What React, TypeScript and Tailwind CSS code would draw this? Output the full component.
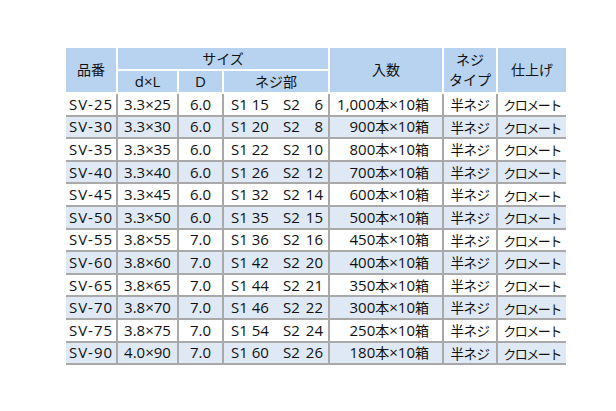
import React from "react";

const rows: [string, string, string, string, string, string][] = [
  ["SV-25", "3.3×25", "6.0", "15", "6", "1,000"],
  ["SV-30", "3.3×30", "6.0", "20", "8", "900"],
  ["SV-35", "3.3×35", "6.0", "22", "10", "800"],
  ["SV-40", "3.3×40", "6.0", "26", "12", "700"],
  ["SV-45", "3.3×45", "6.0", "32", "14", "600"],
  ["SV-50", "3.3×50", "6.0", "35", "15", "500"],
  ["SV-55", "3.8×55", "7.0", "36", "16", "450"],
  ["SV-60", "3.8×60", "7.0", "42", "20", "400"],
  ["SV-65", "3.8×65", "7.0", "44", "21", "350"],
  ["SV-70", "3.8×70", "7.0", "46", "22", "300"],
  ["SV-75", "3.8×75", "7.0", "54", "24", "250"],
  ["SV-90", "4.0×90", "7.0", "60", "26", "180"],
];

export default function App() {
  const font = { fontFamily: '"Open Sans", "Noto Sans CJK JP", sans-serif' };
  const hc = "bg-[#b8d3ef] border-2 border-white text-[14px] font-normal text-[#111] p-0";
  const bc = "border-x-2 border-b-2 border-[#a9a9a9] p-0 whitespace-nowrap";
  return (
    <div className="w-[616px] h-[411px] bg-white" style={font}>
      <div className="pl-[66px] pt-[46px]">
        <table className="border-collapse table-fixed w-[500px] text-[#111] text-[15px] leading-none">
          <colgroup>
            <col className="w-[51px]" />
            <col className="w-[61px]" />
            <col className="w-[45px]" />
            <col className="w-[106px]" />
            <col className="w-[114px]" />
            <col className="w-[54px]" />
            <col className="w-[69px]" />
          </colgroup>
          <thead>
            <tr className="h-[23px]">
              <th rowSpan={2} className={`${hc} border-l-0`}>品番</th>
              <th colSpan={3} className={hc}>サイズ</th>
              <th rowSpan={2} className={hc}>入数</th>
              <th rowSpan={2} className={`${hc} leading-[20px]`}>
                ネジ
                <br />
                タイプ
              </th>
              <th rowSpan={2} className={`${hc} border-r-0`}>仕上げ</th>
            </tr>
            <tr className="h-[23px]">
              <th className={`${hc} text-[15px]`}>d×L</th>
              <th className={`${hc} text-[15px]`}>D</th>
              <th className={hc}>ネジ部</th>
            </tr>
          </thead>
          <tbody>
            {rows.map((r, i) => (
              <tr key={r[0]} className={`h-[22.6px] ${i % 2 === 1 ? "bg-[#dfe9f6]" : "bg-white"}`}>
                <td className={`${bc} border-l-0 text-center tracking-[1px]`}>{r[0]}</td>
                <td className={`${bc} text-center`}>{r[1]}</td>
                <td className={`${bc} text-center`}>{r[2]}</td>
                <td className={bc}>
                  <div className="flex pl-[7px] pr-[5px]">
                    <span className="w-[52px]">S1 {r[3]}</span>
                    <span>S2</span>
                    <span className="flex-1 text-right">{r[4]}</span>
                  </div>
                </td>
                <td className={`${bc} text-right pr-[13px]`}>
                  {r[5]}
                  <span className="text-[14px]">本</span>×10<span className="text-[14px]">箱</span>
                </td>
                <td className={`${bc} text-center text-[13.5px] tracking-[-0.5px] pt-[3px]`}>半ネジ</td>
                <td className={`${bc} border-r-0 text-center text-[13px] tracking-[-1.5px] pt-[3px]`}>クロメート</td>
              </tr>
            ))}
          </tbody>
        </table>
      </div>
    </div>
  );
}
